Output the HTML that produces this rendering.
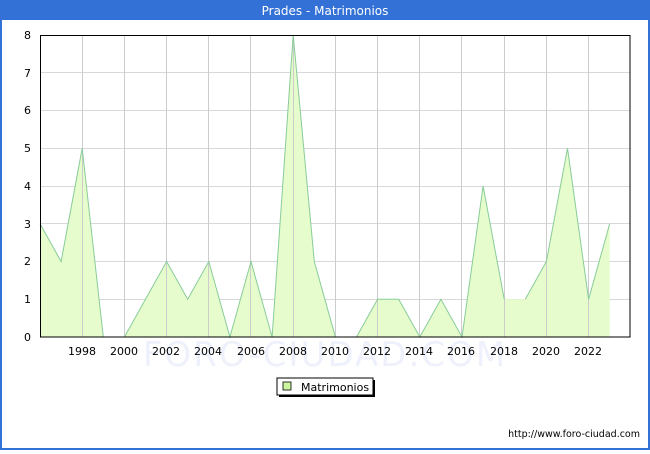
<!DOCTYPE html>
<html><head><meta charset="utf-8"><style>
body{margin:0;width:650px;height:450px;overflow:hidden;background:#fff;font-family:"DejaVu Sans","Liberation Sans",sans-serif;}
</style></head><body>
<svg width="650" height="450" xmlns="http://www.w3.org/2000/svg" font-family="DejaVu Sans, Liberation Sans, sans-serif">
<rect x="0" y="0" width="650" height="450" fill="#3371d6"/>
<rect x="2" y="20" width="646" height="428" fill="#fff"/>
<text x="325" y="15" fill="#fff" font-size="12" text-anchor="middle">Prades - Matrimonios</text>
<text x="325" y="366" fill="#eef1fb" font-size="34" text-anchor="middle" letter-spacing="2">FORO-CIUDAD.COM</text>
<g stroke="#d8d8d8" stroke-width="1">
<line x1="40" y1="299.5" x2="630" y2="299.5"/><line x1="40" y1="261.5" x2="630" y2="261.5"/><line x1="40" y1="223.5" x2="630" y2="223.5"/><line x1="40" y1="186.5" x2="630" y2="186.5"/><line x1="40" y1="148.5" x2="630" y2="148.5"/><line x1="40" y1="110.5" x2="630" y2="110.5"/><line x1="40" y1="72.5" x2="630" y2="72.5"/>
</g>
<polygon fill="#e6fccc" points="40,337 40,223.75 61.1,261.5 82.2,148.25 103.3,337 124.4,337 145.5,299.25 166.6,261.5 187.7,299.25 208.8,261.5 229.9,337 251,261.5 272.1,337 293.2,35 314.3,261.5 335.4,337 356.5,337 377.6,299.25 398.7,299.25 419.8,337 440.9,299.25 462,337 483.1,186 504.2,299.25 525.3,299.25 546.4,261.5 567.5,148.25 588.6,299.25 609.7,223.75 609.7,337"/>
<g stroke="#cccccc" stroke-width="1">
<line x1="82.5" y1="35" x2="82.5" y2="337"/><line x1="124.5" y1="35" x2="124.5" y2="337"/><line x1="166.5" y1="35" x2="166.5" y2="337"/><line x1="208.5" y1="35" x2="208.5" y2="337"/><line x1="250.5" y1="35" x2="250.5" y2="337"/><line x1="293.5" y1="35" x2="293.5" y2="337"/><line x1="335.5" y1="35" x2="335.5" y2="337"/><line x1="377.5" y1="35" x2="377.5" y2="337"/><line x1="419.5" y1="35" x2="419.5" y2="337"/><line x1="461.5" y1="35" x2="461.5" y2="337"/><line x1="504.5" y1="35" x2="504.5" y2="337"/><line x1="546.5" y1="35" x2="546.5" y2="337"/><line x1="588.5" y1="35" x2="588.5" y2="337"/>
</g>
<polyline fill="none" stroke="#88cc99" stroke-width="1" points="40,223.75 61.1,261.5 82.2,148.25 103.3,337"/>
<polyline fill="none" stroke="#88cc99" stroke-width="1" points="124.4,337 145.5,299.25 166.6,261.5 187.7,299.25 208.8,261.5 229.9,337 251,261.5 272.1,337 293.2,35 314.3,261.5 335.4,337"/>
<polyline fill="none" stroke="#88cc99" stroke-width="1" points="356.5,337 377.6,299.25 398.7,299.25 419.8,337 440.9,299.25 462,337 483.1,186 504.2,299.25"/>
<polyline fill="none" stroke="#88cc99" stroke-width="1" points="525.3,299.25 546.4,261.5 567.5,148.25 588.6,299.25 609.7,223.75"/>
<rect x="40.5" y="35.5" width="589.5" height="301.5" fill="none" stroke="#000" stroke-width="1"/>
<g font-size="11" fill="#000" text-anchor="end">
<text x="31" y="341">0</text><text x="31" y="303">1</text><text x="31" y="265">2</text><text x="31" y="228">3</text><text x="31" y="190">4</text><text x="31" y="152">5</text><text x="31" y="114">6</text><text x="31" y="77">7</text><text x="31" y="39">8</text>
</g>
<g font-size="11" fill="#000" text-anchor="middle">
<text x="82" y="355">1998</text><text x="124" y="355">2000</text><text x="166" y="355">2002</text><text x="208" y="355">2004</text><text x="251" y="355">2006</text><text x="293" y="355">2008</text><text x="335" y="355">2010</text><text x="377" y="355">2012</text><text x="419" y="355">2014</text><text x="461" y="355">2016</text><text x="504" y="355">2018</text><text x="546" y="355">2020</text><text x="588" y="355">2022</text>
</g>
<rect x="279" y="380" width="96" height="17" fill="#000"/>
<rect x="277" y="378" width="96" height="17" fill="#fff" stroke="#000" stroke-width="1"/>
<rect x="283" y="382" width="8" height="8" fill="#ccf5a0" stroke="#000" stroke-width="0.8"/>
<text x="301" y="391" font-size="11" fill="#000">Matrimonios</text>
<text x="640" y="437" font-size="9.5" fill="#000" text-anchor="end">http://www.foro-ciudad.com</text>
</svg>
</body></html>
